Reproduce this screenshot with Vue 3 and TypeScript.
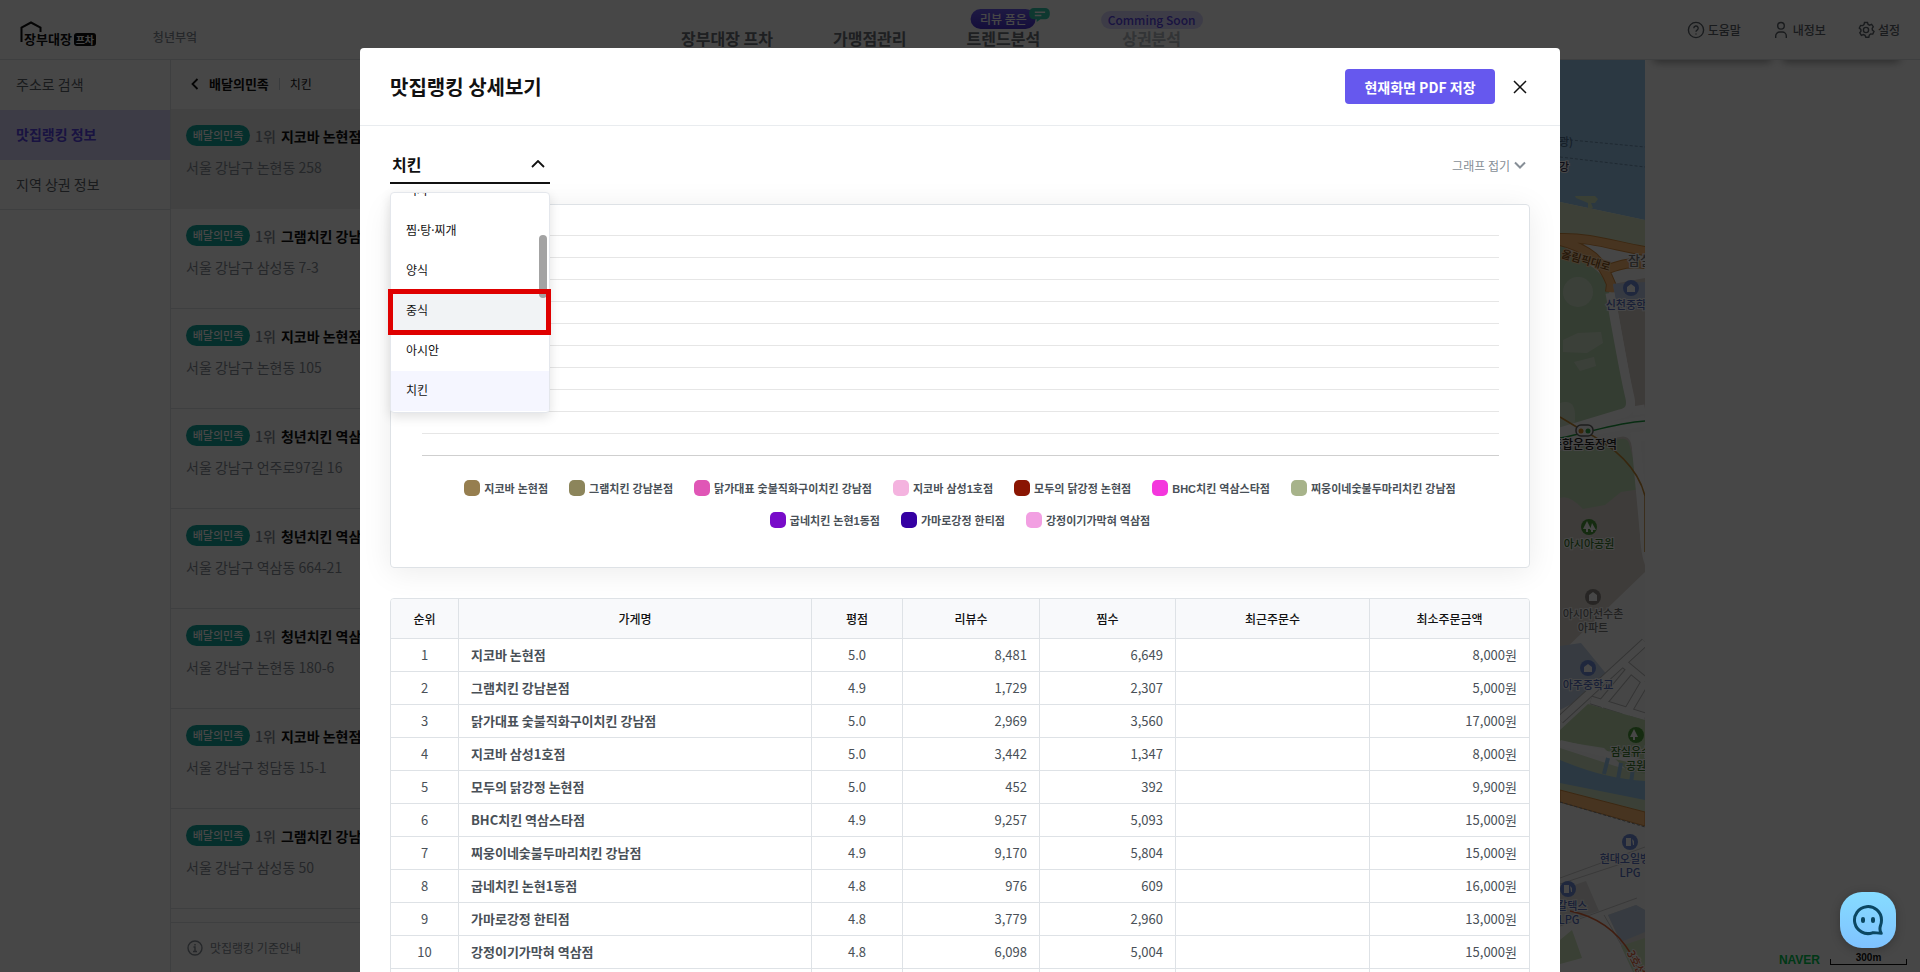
<script setup lang="ts">
import { ref } from 'vue'

interface Place { name: string; address: string }
interface Shop { name: string; color: string; score: string; reviews: string; likes: string; min: string }

const places: Place[] = [
  { name: '지코바 논현점', address: '서울 강남구 논현동 258' },
  { name: '그램치킨 강남본점', address: '서울 강남구 삼성동 7-3' },
  { name: '지코바 논현점', address: '서울 강남구 논현동 105' },
  { name: '청년치킨 역삼점', address: '서울 강남구 언주로97길 16' },
  { name: '청년치킨 역삼점', address: '서울 강남구 역삼동 664-21' },
  { name: '청년치킨 역삼점', address: '서울 강남구 논현동 180-6' },
  { name: '지코바 논현점', address: '서울 강남구 청담동 15-1' },
  { name: '그램치킨 강남본점', address: '서울 강남구 삼성동 50' },
]

const shops: Shop[] = [
  { name: '지코바 논현점', color: '#967e4f', score: '5.0', reviews: '8,481', likes: '6,649', min: '8,000원' },
  { name: '그램치킨 강남본점', color: '#8c855b', score: '4.9', reviews: '1,729', likes: '2,307', min: '5,000원' },
  { name: '닭가대표 숯불직화구이치킨 강남점', color: '#e056b6', score: '5.0', reviews: '2,969', likes: '3,560', min: '17,000원' },
  { name: '지코바 삼성1호점', color: '#f4b3df', score: '5.0', reviews: '3,442', likes: '1,347', min: '8,000원' },
  { name: '모두의 닭강정 논현점', color: '#8a1502', score: '5.0', reviews: '452', likes: '392', min: '9,900원' },
  { name: 'BHC치킨 역삼스타점', color: '#f436dd', score: '4.9', reviews: '9,257', likes: '5,093', min: '15,000원' },
  { name: '찌웅이네숯불두마리치킨 강남점', color: '#a7b38a', score: '4.9', reviews: '9,170', likes: '5,804', min: '15,000원' },
  { name: '굽네치킨 논현1동점', color: '#780bc9', score: '4.8', reviews: '976', likes: '609', min: '16,000원' },
  { name: '가마로강정 한티점', color: '#3500a3', score: '4.8', reviews: '3,779', likes: '2,960', min: '13,000원' },
  { name: '강정이기가막혀 역삼점', color: '#f29fe2', score: '4.8', reviews: '6,098', likes: '5,004', min: '15,000원' },
]

const categories: string[] = ['피자', '찜·탕·찌개', '양식', '중식', '아시안', '치킨']
const selected = ref<string>('치킨')
const hovered = ref<string>('중식')
const gridLines = 11
</script>

<template>
  <div class="page">
    <header class="top">
      <a href="#" class="logo" aria-label="장부대장 프차">
        <svg class="roof" viewBox="0 0 22 22" aria-hidden="true">
          <path d="M1.5 21V6.5L11 1.5l9.5 5V11" fill="none" stroke="#111" stroke-width="2" />
        </svg>
        <span class="logo-name">장부대장</span><span class="logo-tag">프차</span>
      </a>
      <span class="branch">청년부엌</span>
      <nav class="nav">
        <a href="#">장부대장 프차</a>
        <a href="#">가맹점관리</a>
        <a href="#">트렌드분석
          <span class="pill review">리뷰 품은</span>
          <svg class="bubble" viewBox="0 0 22 16" aria-hidden="true">
            <path d="M5 0h12a5 5 0 0 1 5 5v2a5 5 0 0 1-5 5h-5l-4 3v-3H5a5 5 0 0 1-5-5V5a5 5 0 0 1 5-5z" fill="#35c9ab" />
            <path d="M6 4.5h11M6 8h7" stroke="#fff" stroke-width="1.6" />
          </svg>
        </a>
        <a href="#" class="nav-soon">상권분석<span class="pill soon">Comming Soon</span></a>
      </nav>
      <div class="tools">
        <button type="button">
          <svg viewBox="0 0 18 18" aria-hidden="true"><circle cx="9" cy="9" r="7.6" /><path d="M6.8 7.2a2.2 2.2 0 1 1 3.3 1.9c-.8.5-1.1.9-1.1 1.700M9 12.400v1.200" /></svg>도움말
        </button>
        <button type="button">
          <svg viewBox="0 0 18 18" aria-hidden="true"><circle cx="9" cy="4.8" r="3.3" /><path d="M3.700 17v-2a4 4 0 0 1 4-4h2.600a4 4 0 0 1 4 4v2" /></svg>내정보
        </button>
        <button type="button">
          <svg viewBox="0 0 18 18" aria-hidden="true"><circle cx="9" cy="9" r="2.600" /><path d="M7.500 1.500h3l.6 2 1.500.7 2-.9 1.700 2.400-1.100 1.700.2 1.700 1.600 1.300-1.200 2.700-2.200-.1-1.300 1.100-.5 2.200h-3l-.8-2-1.600-.7-2 .7-1.600-2.500 1.200-1.700-.2-1.700-1.500-1.400 1.300-2.600 2.100.2 1.300-1.100z" /></svg>설정
        </button>
      </div>
    </header>

    <div class="body">
      <aside class="side">
        <a href="#">주소로 검색</a>
        <a href="#" class="on">맛집랭킹 정보</a>
        <a href="#">지역 상권 정보</a>
      </aside>
      <section class="ranking">
        <div class="crumb">
          <svg viewBox="0 0 8 12" aria-hidden="true"><path d="M6.500 1 1.500 6l5 5" fill="none" stroke="#111" stroke-width="1.800" /></svg>
          <strong>배달의민족</strong><i></i><span>치킨</span>
        </div>
        <ul class="places">
          <li v-for="(p, i) in places" :key="i" :class="{ on: i === 0 }">
            <div class="place-title"><span class="tag">배달의민족</span><span class="rank">1위</span><strong>{{ p.name }}</strong></div>
            <p>{{ p.address }}</p>
          </li>
        </ul>
        <div class="guide">
          <svg viewBox="0 0 16 16" aria-hidden="true"><circle cx="8" cy="8" r="7" fill="none" stroke="#868e96" stroke-width="1.400" /><path d="M6.500 7H8v4.500M6 11.500h4M8 4v1.400" fill="none" stroke="#868e96" stroke-width="1.400" /></svg>
          맛집랭킹 기준안내
        </div>
      </section>
      <div class="map">
        <svg width="85" height="912" viewBox="0 0 85 912" aria-hidden="true">
          <rect width="85" height="912" fill="#fbfbfb" />
          <path d="M0 0h85v160L0 142z" fill="#9ac8ec" />
          <path d="M0 79l85 8M0 97l85 10" stroke="#6d91b0" stroke-dasharray="3 2" />
          <path d="M15 136h20l3 3-3 4h-4l2 5-5 1v-6l-12-5z" fill="#cfe5bd" />
          <path d="M0 142l85 18v37L0 174z" fill="#d9e7c6" />
          <path d="M0 183l22 18c15 8 24 16 27 30l18 112q2 9-7 11L0 372z" fill="#bcd9b4" />
          <circle cx="18" cy="232" r="15" fill="#d5e6ce" /><path d="M3 280l15-7 23-1 2 11-16 10-24-1zM14 302l20-5 2 9-16 5z" fill="#d5e6ce" />
          <path d="M0 343q16-5 15 15l-1 14H0z" fill="#d5e6ce" />
          <g fill="none" stroke="#d58c3e" stroke-width="10"><path d="M0 178c30-1 55 8 85 13M0 181c30 8 42 20 51 43l-1 8M48 209c14-5 22-7 37-5" /></g>
          <g fill="none" stroke="#ffba74" stroke-width="8"><path d="M0 178c30-1 55 8 85 13M0 181c30 8 42 20 51 43l-1 8M48 209c14-5 22-7 37-5" /></g>
          <path d="M53 224l32-6v133h-9z" fill="#dcd2cd" /><path d="M53 224l32-2v27l-28 1z" fill="#c3d0ec" />
          <path d="M50 233c5 28 14 80 20 105q3 14-10 16L0 372M85 349l-12 2" fill="none" stroke="#fff" stroke-width="9" />
          <path d="M0 389l60-12q8-2 11 6l10 42q-4 60 4 80v7L0 594z" fill="#ded7d0" />
          <path d="M0 391l60-12q7-1 9 4l12 46-20 3-16 13-22 4q-14-15-23-11z" fill="#c2dfb8" />
          <path d="M0 376l85-15M80 376l5 0" stroke="#fff" stroke-width="10" /><path d="M75 372l10 108" stroke="#fff" stroke-width="9" />
          <path d="M0 378c28-5 55-15 85-17" fill="none" stroke="#1f9f40" stroke-width="1.500" />
          <path d="M0 357l20 12q55 27 65 67v56" fill="none" stroke="#c48a32" stroke-width="1.500" />
          <path d="M0 586l21-3 27 33-29 24L0 650z" fill="#c5d4e8" />
          <path d="M85 582L0 660M31 640l54 17M62 602l23 19M70 610l-30 36M85 622l-20 34" fill="none" stroke="#bbb" stroke-width="9" />
          <path d="M85 582L0 660M31 640l54 17M62 602l23 19M70 610l-30 36M85 622l-20 34" fill="none" stroke="#fff" stroke-width="7" />
          <path d="M0 670l28-26 57 16v68L44 688 0 681z" fill="#c5dfb5" />
          <path d="M0 683l85 20" stroke="#fff" stroke-width="6" />
          <path d="M0 688l55 18 30 8v38L0 730z" fill="#d2e6c4" />
          <path d="M0 700q45 19 85 21v19L0 723z" fill="#9ac8ec" /><path d="M48 698l-4 16M61 703l-3 16M73 708l-2 15" stroke="#9ac8ec" stroke-width="4" />
          <path d="M0 730l85 22v14L0 742z" fill="#ffba74" stroke="#d58c3e" /><path d="M0 742l85 25" stroke="#888" stroke-dasharray="3 2" />
          <path d="M0 818l85-31M0 824l85-28M0 866l77-28M44 855l33 57" fill="none" stroke="#ccc" />
          <path d="M0 830l26-9 13 30L0 864zM48 855l28-10 9 5v32l-23 4z" fill="#e0dfdd" /><path d="M48 855l28-10 9 5v22l-24 10z" fill="#c5d4e8" />
          <path d="M61 886l24-8v34H73z" fill="#cfe5bd" /><path d="M0 880l12-10 10 28-22 6z" fill="#cfe5bd" />
          <path d="M10 851q40 8 61 43l8 18" fill="none" stroke="#e46738" stroke-width="1.500" />
          <g>
            <g fill="#6f8edb"><circle cx="71" cy="228" r="8" /><circle cx="28" cy="608" r="8" /><circle cx="70" cy="782" r="8" /><circle cx="8" cy="829" r="8" /></g>
            <g fill="#4b9a3b"><circle cx="29" cy="467" r="8" /><circle cx="76" cy="675" r="8" /></g>
            <circle cx="33" cy="537" r="8" fill="#8c8781" />
            <g fill="#fff">
              <path d="M67 232v-5l4-3 4 3v5zM24 612v-5l4-3 4 3v5zM29 541v-6l4-3 4 3v6z" />
              <path d="M27 461l4 8h-3v3h-2v-3h-3zM32 463l4 7h-3v2h-2v-2h-1zM74 669l4 8h-3v3h-2v-3h-3z" />
              <path d="M66 778h5v8h-5zM4 825h5v8H4zM72 779l2 2v4h-1zM10 826l2 2v4h-1z" />
            </g>
            <rect x="16" y="365" width="17" height="11" rx="5" fill="#fff" stroke="#666" stroke-width="1.500" /><circle cx="21" cy="371" r="2.500" fill="#d98b20" /><circle cx="28" cy="371" r="2.500" fill="#36a84c" />
          </g>
          <g class="labels" text-anchor="middle">
            <text x="-1" y="86" class="blue">(관광)</text><text x="-1" y="111" class="navy">한강</text>
            <text x="26" y="204" class="brown" transform="rotate(16 25 200)">올림픽대로</text><text x="80" y="205" class="grey big">잠실</text>
            <text x="71" y="249" class="school">신천중학교</text><text x="24" y="389" class="dark">종합운동장역</text>
            <text x="29" y="488" class="park">아시아공원</text><text x="33" y="558" class="grey">아시아선수촌</text><text x="33" y="572" class="grey">아파트</text>
            <text x="28" y="629" class="school">아주중학교</text><text x="76" y="696" class="park">잠실유수지</text><text x="76" y="710" class="park">공원</text>
            <text x="70" y="803" class="school">현대오일뱅크</text><text x="70" y="817" class="school">LPG</text><text x="5" y="850" class="school">GS칼텍스</text><text x="9" y="864" class="school">LPG</text>
            <text x="78" y="908" class="line" transform="rotate(62 78 902)">3호선</text>
          </g>
        </svg>
      </div>
      <div class="rest">
        <div class="tabs"><span></span><span></span></div>
        <div class="scale"><b>NAVER</b><span>300m</span></div>
      </div>
    </div>

    <div class="overlay">
      <div class="modal" role="dialog" aria-modal="true" aria-labelledby="modal-title">
        <div class="modal-head">
          <h1 id="modal-title">맛집랭킹 상세보기</h1>
          <button type="button" class="save">현재화면 PDF 저장</button>
          <button type="button" class="close" aria-label="닫기">
            <svg viewBox="0 0 14 14" aria-hidden="true"><path d="M1 1l12 12M13 1 1 13" fill="none" stroke="#111" stroke-width="1.500" /></svg>
          </button>
        </div>
        <div class="modal-body">
          <div class="toolbar">
            <div class="picker">
              <select v-model="selected" aria-label="카테고리">
                <option v-for="c in categories" :key="c" :value="c">{{ c }}</option>
              </select>
              <svg class="caret" viewBox="0 0 14 8" aria-hidden="true"><path d="M1 7l6-6 6 6" fill="none" stroke="#111" stroke-width="1.800" /></svg>
              <ul class="menu" role="listbox" aria-label="카테고리">
                <li v-for="c in categories" :key="c" role="option" :aria-selected="c === selected" :class="{ chosen: c === selected, hover: c === hovered }" @click="selected = c" @mouseenter="hovered = c">{{ c }}</li>
              </ul>
              <span class="thumb"></span>
              <span class="focus-box"></span>
            </div>
            <button type="button" class="fold">그래프 접기
              <svg viewBox="0 0 12 8" aria-hidden="true"><path d="M1 1.500l5 5 5-5" fill="none" stroke="#868e96" stroke-width="2" /></svg>
            </button>
          </div>

          <div class="chart">
            <div class="plot"><i v-for="n in gridLines" :key="n"></i></div>
            <ul class="legend">
              <li v-for="s in shops" :key="s.name"><span :style="{ background: s.color }"></span>{{ s.name }}</li>
            </ul>
          </div>

          <div class="table-box">
            <table>
              <thead>
                <tr>
                  <th class="w-rank">순위</th><th class="w-name">가게명</th><th class="w-score">평점</th><th class="w-review">리뷰수</th>
                  <th class="w-like">찜수</th><th class="w-order">최근주문수</th><th class="w-min">최소주문금액</th>
                </tr>
              </thead>
              <tbody>
                <tr v-for="(s, i) in shops" :key="s.name">
                  <td class="mid">{{ i + 1 }}</td><td class="name">{{ s.name }}</td><td class="mid">{{ s.score }}</td>
                  <td>{{ s.reviews }}</td><td>{{ s.likes }}</td><td></td><td>{{ s.min }}</td>
                </tr>
                <tr><td></td><td></td><td></td><td></td><td></td><td></td><td></td></tr>
              </tbody>
            </table>
          </div>
        </div>
      </div>
    </div>

    <button type="button" class="chat" aria-label="채팅 상담">
      <svg viewBox="0 0 32 32" aria-hidden="true">
        <path d="M29.500 16A13.500 13.500 0 1 0 20.500 28.800C22.500 28.200 25 29.300 29.300 29.300C27.600 27 27.600 24.500 28.500 21.500Q29.500 19 29.500 16z" fill="none" stroke="#0b4762" stroke-width="3" stroke-linejoin="round" />
        <path d="M11 15v2M21 15v2" stroke="#0b4762" stroke-width="4" stroke-linecap="round" />
      </svg>
    </button>
  </div>
</template>

<style>
html, body { margin: 0; overflow: hidden; }
</style>

<style scoped>
* { box-sizing: border-box; }
.page { position: relative; display: flex; flex-direction: column; height: 100vh; overflow: hidden; background: #fff; color: #111; font-family: "Noto Sans CJK KR", "Noto Sans", sans-serif; font-size: 14px; }
ul, p, h1 { margin: 0; padding: 0; list-style: none; }
button { font: inherit; border: 0; padding: 0; background: none; cursor: pointer; }
a { color: inherit; text-decoration: none; }

.top { position: relative; display: flex; flex: none; align-items: flex-end; height: 60px; border-bottom: 1px solid #dee2e6; }
.logo { position: relative; display: flex; align-items: center; gap: 2px; margin: 0 0 10px 24px; line-height: 20px; }
.roof { position: absolute; left: -4px; top: -8px; width: 22px; height: 22px; }
.logo-name { font-size: 13px; font-weight: 700; }
.logo-tag { width: 22px; border-radius: 3px; background: #111; color: #fff; font-size: 10px; font-weight: 700; line-height: 13px; text-align: center; }
.branch { margin: 0 0 12px 57px; color: #868e96; font-size: 12px; font-weight: 500; line-height: 20px; }
.nav { position: absolute; left: 50%; bottom: 9px; display: flex; gap: 60px; margin-left: -279px; color: #6b7178; font-size: 16px; font-weight: 700; line-height: 24px; white-space: nowrap; }
.nav a { position: relative; }
.nav .nav-soon { margin-left: 22px; color: #b4bac0; }
.pill { position: absolute; bottom: 21px; left: 50%; transform: translateX(-50%); border-radius: 10px; font-size: 12px; font-weight: 500; line-height: 18px; }
.review { padding: 1px 9px; background: linear-gradient(#6c5cf0, #4a32d0); color: #fff; }
.bubble { position: absolute; left: 62px; top: -18px; width: 21px; height: 15px; }
.soon { padding: 0 7px; background: #dcd8ff; color: #5a45e8; }
.tools { display: flex; gap: 31px; margin: 0 20px 17px auto; }
.tools button { display: flex; align-items: center; gap: 3px; color: #5c636a; font-size: 12px; font-weight: 500; line-height: 24px; }
.tools svg { width: 18px; height: 18px; fill: none; stroke: #5c636a; stroke-width: 1.400; }

.body { display: flex; flex: 1; min-height: 0; }
.side { flex: none; width: 171px; border-right: 1px solid #dee2e6; }
.side a { display: block; height: 50px; padding: 0 16px; border-bottom: 1px solid transparent; color: #5c636a; line-height: 49px; }
.side .on { background: #dcd8fa; color: #5a45e8; font-weight: 700; }
.side a:last-child { border-bottom-color: #dee2e6; }
.ranking { display: flex; flex: none; flex-direction: column; width: 360px; }
.crumb { display: flex; flex: none; align-items: center; height: 49px; padding: 0 20px 2px; font-size: 13px; }
.crumb svg { width: 8px; height: 12px; margin-right: 10px; }
.crumb i { width: 1px; height: 12px; margin: 0 10px; background: #ced4da; }
.crumb span { font-size: 12px; }
.places { flex: 1; min-height: 0; overflow: hidden; }
.places li { height: 100px; padding: 16px 15px; border-bottom: 1px solid #dee2e6; }
.places .on { background: #ebebeb; border-color: #ebebeb; }
.place-title { display: flex; align-items: center; height: 21px; white-space: nowrap; }
.tag { width: 64px; border-radius: 11px; background: #12a89e; color: #fff; font-size: 11px; font-weight: 500; line-height: 21px; text-align: center; }
.rank { margin: 0 5px; color: #868e96; font-weight: 500; }
.places p { margin-top: 11px; color: #868e96; line-height: 20px; }
.guide { display: flex; flex: none; align-items: center; gap: 7px; height: 50px; padding-left: 16px; border-top: 1px solid #dee2e6; color: #868e96; font-size: 12px; }
.guide svg { width: 16px; height: 16px; }
.map { display: flex; flex: 1; justify-content: flex-end; min-width: 0; overflow: hidden; background: #eee; }
.map svg { flex: none; overflow: visible; }
.labels text { font-size: 11px; font-weight: 500; paint-order: stroke; stroke: #fff; stroke-width: 2px; }
.labels .big { font-size: 13px; }
.labels .blue { fill: #4d6f91; stroke: none; }
.labels .navy { fill: #335; }
.labels .brown { fill: #834f15; stroke: #ffd6a5; }
.labels .grey { fill: #777; }
.labels .school { fill: #566fc3; }
.labels .dark { fill: #222; font-size: 12px; }
.labels .park { fill: #3a7a2b; }
.labels .line { fill: #e46738; }
.rest { position: relative; display: flex; flex: none; flex-direction: column; justify-content: space-between; width: 275px; background: #fff; overflow: hidden; }
.tabs { display: flex; gap: 10px; padding: 0 20px 0 8px; margin-top: -10px; }
.tabs span { flex: 1; height: 10px; border-radius: 4px; box-shadow: 0 2px 8px rgba(0, 0, 0, 0.4); }
.scale { display: flex; align-items: flex-end; gap: 10px; margin: 0 13px 7px auto; }
.scale b { color: #00c850; font-family: "Liberation Sans", Arial, sans-serif; font-size: 12px; font-weight: 900; line-height: 10px; }
.scale span { width: 77px; height: 14px; background: linear-gradient(#111, #111) left bottom / 1px 6px no-repeat, linear-gradient(#111, #111) right bottom / 1px 6px no-repeat, linear-gradient(#111, #111) bottom / 100% 1px no-repeat; font-family: "Liberation Sans", Arial, sans-serif; font-size: 10px; font-weight: 700; line-height: 14px; text-align: center; }

.overlay { position: absolute; inset: 0; display: flex; justify-content: center; padding-top: 48px; background: rgba(0, 0, 0, 0.72); overflow: hidden; }
.modal { width: 1200px; max-width: calc(100% - 48px); border-radius: 4px 4px 0 0; background: #fff; overflow: hidden; }
.modal-head { display: flex; align-items: center; height: 78px; padding: 0 33px 0 30px; border-bottom: 1px solid #e9ecef; }
h1 { flex: 1; font-size: 20px; font-weight: 700; line-height: 30px; }
.save { width: 150px; height: 35px; border-radius: 4px; background: #6658ee; color: #fff; font-weight: 700; }
.close { display: flex; margin-left: 18px; }
.close svg { width: 14px; height: 14px; }
.modal-body { padding: 20px 30px 0; }
.toolbar { display: flex; align-items: center; justify-content: space-between; margin-bottom: 20px; }
.picker { position: relative; z-index: 1; width: 160px; height: 38px; }
select { display: block; width: 100%; height: 38px; padding: 0 2px; border: 0; border-bottom: 2px solid #111; border-radius: 0; outline: none; appearance: none; background: #fff; color: #111; font: 700 16px "Noto Sans CJK KR", sans-serif; }
.caret { position: absolute; right: 5px; top: 14px; width: 14px; height: 8px; pointer-events: none; }
.menu { position: absolute; left: 0; top: 46px; display: flex; flex-direction: column; justify-content: flex-end; width: 160px; height: 221px; padding-bottom: 1px; border: 1px solid #e4e7ec; border-radius: 4px; background: #fff; box-shadow: 0 4px 12px rgba(0, 0, 0, 0.12); overflow: hidden; font-family: "Noto Sans", "Noto Sans CJK KR", sans-serif; font-size: 12px; }
.menu li { flex: none; height: 40px; padding-left: 15px; line-height: 40px; }
.menu .hover { background: #f1f3f5; }
.menu .chosen { background: #f5f6ff; }
.thumb { position: absolute; right: 3px; top: 89px; width: 8px; height: 63px; border-radius: 4px; background: #a3a3a3; }
.focus-box { position: absolute; left: -2px; top: 143px; width: 163px; height: 46px; border: 5px solid #df0000; pointer-events: none; }
.fold { display: flex; align-items: center; gap: 4px; margin-right: 4px; color: #868e96; font-size: 12px; }
.fold svg { width: 12px; height: 8px; }

.chart { height: 364px; padding: 30px; border: 1px solid #dee2e6; border-radius: 4px; box-shadow: 0 4px 30px rgba(0, 0, 0, 0.08); }
.plot { display: flex; flex-direction: column; gap: 21px; padding-left: 1px; margin-bottom: 20px; }
.plot i { height: 1px; background: #e6e6e6; }
.plot i:last-child { background: #cfcfcf; }
.legend { display: flex; flex-wrap: wrap; justify-content: center; gap: 8px 21px; padding: 0 36px; color: #495057; font: 700 11px "Liberation Sans", "Noto Sans CJK KR", sans-serif; }
.legend li { display: flex; align-items: center; gap: 4px; height: 24px; white-space: nowrap; }
.legend span { width: 16px; height: 16px; border-radius: 5px; }

.table-box { margin-top: 30px; border: 1px solid #dee2e6; border-radius: 4px; overflow: hidden; }
table { width: 100%; border-spacing: 0; table-layout: fixed; color: #495057; font-size: 13px; }
th, td { padding: 0 12px; border-right: 1px solid #dee2e6; border-bottom: 1px solid #dee2e6; text-align: right; }
th:last-child, td:last-child { border-right: 0; }
th { height: 40px; background: #f8f9fb; color: #111; font-size: 12px; font-weight: 500; text-align: center; }
td { height: 33px; line-height: 20px; }
.mid { text-align: center; }
.name { font-weight: 700; text-align: left; }
.w-rank { width: 68px; }
.w-name { width: 353px; }
.w-score { width: 91px; }
.w-review { width: 137px; }
.w-like { width: 136px; }
.w-order { width: 194px; }
.w-min { width: 159px; }

.chat { position: absolute; right: 24px; bottom: 24px; display: flex; align-items: center; justify-content: center; width: 56px; height: 56px; border-radius: 22px; background: linear-gradient(#86dcff, #7fc2ff); box-shadow: 0 2px 10px rgba(0, 0, 0, 0.25); }
.chat svg { width: 32px; height: 32px; }
</style>
